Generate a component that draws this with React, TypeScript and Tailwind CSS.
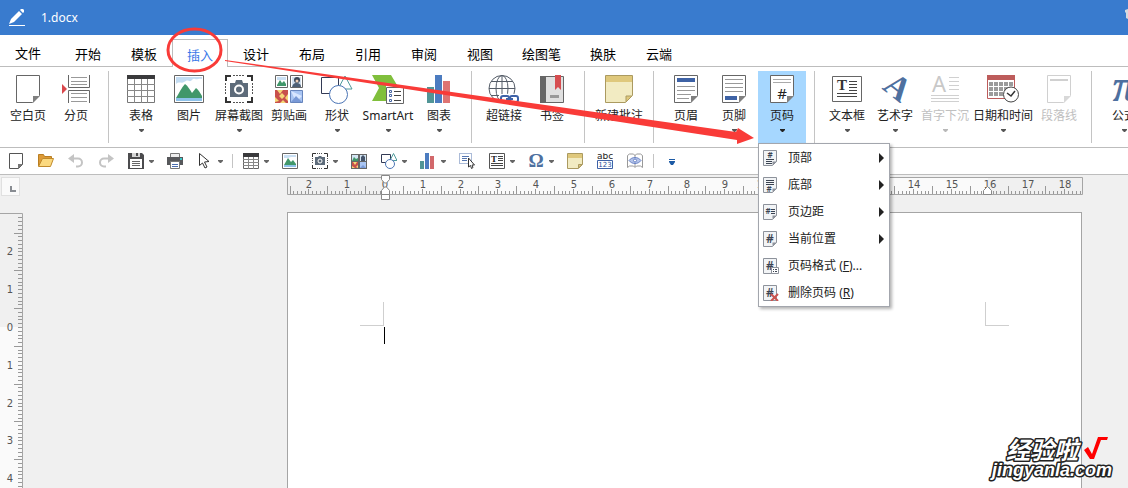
/**
 * App.tsx: Word processor window with the Insert ribbon open
 *
 * Title bar, ribbon tabs, ribbon groups, quick toolbar, rulers and page.
 * The page number button has its drop-down menu open.
 */

import type { ReactNode } from 'react'

interface IconProps {
    w?: number
    h?: number
    children: ReactNode
}

function Icon({ w = 28, h = 28, children }: IconProps) {
    return (
        <svg width={w} height={h} viewBox={`0 0 ${w} ${h}`} fill="none" aria-hidden="true" className="shrink-0">
            {children}
        </svg>
    )
}

function Caret({ className = 'text-[#555]' }: { className?: string }) {
    return (
        <svg width="5" height="3" viewBox="0 0 5 3" className={className} aria-hidden="true">
            <path d="M0 0h5v1L3 3H2L0 1z" fill="currentColor" />
        </svg>
    )
}

/* ---------- Ribbon icons (28px) ---------- */

function SheetIcon({ children, stroke = '#666', fold = '#808080' }: { children?: ReactNode; stroke?: string; fold?: string }) {
    return (
        <Icon w={24}>
            <path d="M.5.5h23v20l-7 7H.5z" fill="#fff" stroke={stroke} />
            <path d="M17 21h7l-7 7z" fill={fold} />
            {children}
        </Icon>
    )
}

const PageBreakIcon = () => (
    <Icon>
        <path d="M0 9l5 5-5 5z" fill="#d9484c" />
        <path d="M6.500 0v12.500h21V0M6.500 28V15.500h21V28" stroke="#666" />
        <path d="M9 2.500h16M9 6.500h16M9 9.500h16M9 18.500h16M9 22.500h16M9 26.500h16" stroke="#999" />
    </Icon>
)

const TableIcon = () => (
    <Icon>
        <path d="M.5.5h27v27H.5z" fill="#fff" stroke="#777" />
        <path d="M0 0h28v4H0z" fill="#3a3a3c" />
        <path d="M0 9.500h28M0 15.500h28M0 21.500h28M7.500 4v24M14.500 4v24M20.500 4v24" stroke="#888" />
    </Icon>
)

const PictureIcon = () => (
    <Icon w={30}>
        <path d="M.5.5h29v27H.5z" fill="#fff" stroke="#666" />
        <path d="M2 2h26v2c-3-1-5 1-7 0-3-1-3 3-6 2-2-1-3 0-5 1-2 2-5-1-8 2z" fill="#c3dcf2" />
        <path d="M2 23c3-5 6-11 9-14 3 2 5 6 7 9l4-5c3 2 4 5 6 8v3H2z" fill="#41976a" />
        <path d="M2 23h26v3H2z" fill="#8ec2ea" />
    </Icon>
)

const ScreenshotIcon = () => (
    <Icon>
        <path d="M8 .5h12M8 27.500h12M.5 8v12M27.500 8v12" stroke="#555" strokeDasharray="2 1" />
        <path d="M0 6V0h6v2H2v4zM22 0h6v6h-2V2h-4zM0 22h2v4h4v2H0zM26 22h2v6h-6v-2h4z" fill="#333" />
        <path d="M5 8h5l1-3h6l1 3h5v14H5z" fill="#5d6b7a" />
        <circle cx="14" cy="14.500" r="4" stroke="#fff" strokeWidth="2" />
    </Icon>
)

const ClipArtIcon = () => (
    <Icon>
        <path d="M.5.5h12v12H.5zM15.500.5h12v12h-12z" fill="#fff" stroke="#666" />
        <path d="M2 2h9v3H2z" fill="#c9dff3" />
        <path d="M2 10l3-5 2 3 2-2 2 3v2H2z" fill="#41976a" />
        <path d="M17 2h9v9h-9z" fill="#d3e1ef" />
        <circle cx="22" cy="5" r="3" fill="#3c4756" />
        <path d="M17 12c1-4 3-4 5-4s4 1 4 4z" fill="#4e6075" />
        <circle cx="22" cy="6" r="1.500" fill="#f0d0b8" />
        <path d="M0 15h13v13H0z" fill="#c8504c" />
        <path d="M2 15l3 4 3-4zM7 18l3 3-3 3-3-3zM13 19l-3 4 3 3zM0 22l4 4-4 1zM5 28l3-3 3 3z" fill="#f5d878" />
        <path d="M15.500 15.500h12v12h-12z" fill="#a9c5f3" stroke="#6785bd" />
        <path d="M16 16l11 5-6 6z" fill="#d8e6ff" />
        <path d="M16 27l5-6 6 6z" fill="#7999d6" />
    </Icon>
)

const ShapesIcon = () => (
    <Icon w={32} h={29}>
        <path d="M.5 2.500h17v16H.5z" stroke="#333a55" />
        <path d="M24 1l7 13H17z" stroke="#4f9a9b" />
        <circle cx="17.500" cy="19.500" r="9" fill="#fff" stroke="#4b74b5" />
    </Icon>
)

const SmartArtIcon = () => (
    <Icon w={32} h={29}>
        <path d="M0 0h19l6 10H14v16H0l7-13z" fill="#80bf3c" />
        <path d="M14.500 12.500h17v16h-17z" fill="#fff" stroke="#666" />
        <path d="M17.500 15.500h2v2h-2zM17.500 19.500h2v2h-2zM17.500 24.500h2v2h-2z" stroke="#4867a5" />
        <path d="M22 16.500h7M22 20.500h7M22 25.500h7" stroke="#444" />
    </Icon>
)

const ChartIcon = () => (
    <Icon w={24}>
        <path d="M0 12h7v16H0z" fill="#519596" />
        <path d="M8 0h7v28H8z" fill="#4c7cc0" />
        <path d="M16 6h7v22h-7z" fill="#de7473" />
    </Icon>
)

const LinkIcon = () => (
    <Icon w={32}>
        <circle cx="14" cy="13.500" r="13" stroke="#555d68" />
        <ellipse cx="14" cy="13.500" rx="6" ry="13" stroke="#555d68" />
        <path d="M14 0v27M1 13.500h26M3 6.500h22M3 20.500h22" stroke="#555d68" />
        <path d="M11 19h21v9H11z" fill="#fff" />
        <rect x="13" y="21" width="8" height="6" rx="2" stroke="#3e62a8" strokeWidth="2" />
        <rect x="22" y="21" width="8" height="6" rx="2" stroke="#3e62a8" strokeWidth="2" />
        <path d="M18 24h7" stroke="#3e62a8" strokeWidth="2" />
    </Icon>
)

const BookmarkIcon = () => (
    <Icon w={24}>
        <path d="M.5 1.500h23v26H.5z" fill="#e0e0e0" stroke="#666" />
        <path d="M0 1h6v27H0z" fill="#666" />
        <path d="M15 0h6v15l-3-3-3 3z" fill="#d64d50" />
        <path d="M10 20h9v3h-9z" fill="#999" />
    </Icon>
)

const NoteIcon = () => (
    <Icon>
        <path d="M.5.5h27v20l-7 7H.5z" fill="#f2ebc2" stroke="#ab9a60" />
        <path d="M1 1h26v6H1z" fill="#dfc87c" />
        <path d="M21 27v-6h6z" fill="#dfc87c" stroke="#ab9a60" />
    </Icon>
)

const HeaderIcon = () => (
    <SheetIcon>
        <path d="M3 3h18v4H3z" fill="#3e62a5" />
        <path d="M3 11.500h18M3 15.500h18M3 19.500h14M3 23.500h12" stroke="#999" />
    </SheetIcon>
)

const FooterIcon = () => (
    <SheetIcon>
        <path d="M3 4.500h18M3 8.500h18M3 12.500h18M3 16.500h18" stroke="#999" />
        <path d="M3 21h12v4H3z" fill="#3e62a5" />
    </SheetIcon>
)

const PageNumberIcon = () => (
    <SheetIcon>
        <path d="M3 4.500h18M3 7.500h18" stroke="#aaa" />
        <text x="12" y="24" textAnchor="middle" fontSize="15" fontFamily="Noto Sans, sans-serif" fill="#222">#</text>
    </SheetIcon>
)

const TextBoxIcon = () => (
    <Icon w={30}>
        <path d="M.5 1.500h29v25H.5z" fill="#fff" stroke="#666" />
        <text x="10" y="15" textAnchor="middle" fontSize="15" fontWeight="700" fontFamily="Liberation Serif, serif" fill="#333">T</text>
        <path d="M17 6.500h8M17 9.500h8M17 12.500h8M17 15.500h8M5 18.500h20M5 21.500h20" stroke="#444" />
    </Icon>
)

const WordArtIcon = () => (
    <Icon>
        <text x="10" y="21" transform="rotate(38 10 21)" textAnchor="middle" fontSize="34" fontWeight="700" fontFamily="Liberation Serif, serif" fill="#4e709f">A</text>
    </Icon>
)

const DropCapIcon = () => (
    <Icon>
        <text x="8" y="17" textAnchor="middle" fontSize="22" fontFamily="Noto Sans, sans-serif" fill="#c8c8c8">A</text>
        <path d="M18 2.500h10M18 6.500h10M18 10.500h10M18 14.500h10M0 20.500h28M0 23.500h28M0 26.500h28" stroke="#d0d0d0" />
    </Icon>
)

const DateTimeIcon = () => (
    <Icon w={32}>
        <path d="M.5.5h27v23H.5z" fill="#fff" stroke="#bd5c5b" />
        <path d="M0 0h28v5H0z" fill="#bd5c5b" />
        <path d="M2 9h24M2 14h24M2 19h18" stroke="#9b9b9b" strokeWidth="4" strokeDasharray="4 1" />
        <circle cx="24" cy="19.500" r="7.500" fill="#fff" stroke="#444" />
        <path d="M20 18l4 3 4-5" stroke="#333" strokeWidth="1.500" />
    </Icon>
)

const ParagraphLineIcon = () => (
    <SheetIcon stroke="#d0d0d0" fold="#d8d8d8">
        <path d="M3 4h18v2H3z" fill="#d0d0d0" />
    </SheetIcon>
)

const FormulaIcon = () => (
    <Icon>
        <text x="15" y="26" textAnchor="middle" fontSize="46" fontWeight="700" fontStyle="italic" fontFamily="Liberation Serif, serif" fill="#4e709f">π</text>
    </Icon>
)

/* ---------- Quick toolbar icons (16px) ---------- */

const SmallSheet = () => (
    <Icon w={16} h={16}>
        <path d="M1.500.5h13v11l-4 4h-9z" fill="#fff" stroke="#555" />
        <path d="M10 11h5l-5 5z" fill="#777" />
    </Icon>
)

const FolderIcon = () => (
    <Icon w={16} h={16}>
        <path d="M.5 13V1.500h5l1 2h7V6" fill="#dd9a36" stroke="#b97e22" />
        <path d="M.5 13.500L4.500 5.500h11l-3 8z" fill="#fbd97f" stroke="#c08a2c" />
    </Icon>
)

const UndoIcon = () => (
    <Icon w={16} h={16}>
        <path d="M0 5.500L6 1v9z" fill="#c4c4c4" />
        <path d="M5 5.500h5a4 4 0 010 8H8" stroke="#c4c4c4" strokeWidth="2" />
    </Icon>
)

const RedoIcon = () => (
    <Icon w={16} h={16}>
        <path d="M16 5.500L10 1v9z" fill="#c4c4c4" />
        <path d="M11 5.500H6a4 4 0 000 8h2" stroke="#c4c4c4" strokeWidth="2" />
    </Icon>
)

const SaveIcon = () => (
    <Icon w={16} h={16}>
        <path d="M0 0h14l2 2v14H0z" fill="#4c4c4e" />
        <path d="M4 0h8v4H4z" fill="#d5d5d5" />
        <path d="M8 0h2v3H8z" fill="#4c4c4e" />
        <path d="M2 6h12v9H2z" fill="#fff" />
        <path d="M4 8.500h8M4 10.500h8M4 12.500h8" stroke="#666" />
    </Icon>
)

const PrintIcon = () => (
    <Icon w={16} h={16}>
        <path d="M3.500.5h9V5h-9z" fill="#eee" stroke="#777" />
        <path d="M0 4h16v8H0z" fill="#57585b" />
        <path d="M13 5h2v2h-2z" fill="#38c7c7" />
        <path d="M3.500 8.500h9v7h-9z" fill="#fff" stroke="#777" />
        <path d="M5 11.500h6M5 13.500h6" stroke="#4b6eb0" />
    </Icon>
)

const CursorIcon = () => (
    <Icon w={16} h={16}>
        <path d="M2.500.5v12l3-2.500 2.500 5 2-1-2.500-5 4.500-.5z" fill="#fff" stroke="#333" />
    </Icon>
)

const SmallTable = () => (
    <Icon w={16} h={16}>
        <path d="M.5.5h15v15H.5z" fill="#fff" stroke="#666" />
        <path d="M0 0h16v4H0z" fill="#3a3a3c" />
        <path d="M0 6.500h16M0 9.500h16M0 12.500h16M5.500 4v12M10.500 4v12" stroke="#888" />
    </Icon>
)

const SmallPicture = () => (
    <Icon w={16} h={16}>
        <path d="M.5.5h15v15H.5z" fill="#fff" stroke="#666" />
        <path d="M2 2h12v2H9L6 5H2z" fill="#c9dff3" />
        <path d="M2 12l4-7 3 4 2-2 3 4v2H2z" fill="#41976a" />
        <path d="M2 12h12v2H2z" fill="#8ec2ea" />
    </Icon>
)

const SmallScreenshot = () => (
    <Icon w={16} h={16}>
        <path d="M.5 4V.5H4M12 .5h3.500V4M.5 12v3.500H4M15.500 12v3.500H12" stroke="#333" />
        <path d="M5 .5h6M5 15.500h6M.5 5v6M15.500 5v6" stroke="#555" strokeDasharray="1 1" />
        <path d="M3 4h3l1-1h2l1 1h3v8H3z" fill="#5d6b7a" />
        <circle cx="8" cy="8" r="2" stroke="#fff" />
    </Icon>
)

const SmallClipArt = () => (
    <Icon w={16} h={16}>
        <path d="M0 1h16v15H0z" fill="#666" />
        <path d="M1 2h6v6H1zM9 2h6v6H9z" fill="#d3e5f3" />
        <path d="M1 8l2-4 2 2 2-1v3z" fill="#41976a" />
        <path d="M10 8V4l2-2 2 2v4z" fill="#44536a" />
        <path d="M1 9h6v6H1z" fill="#c8504c" />
        <path d="M2 9l2 3 2-3zM1 13l3 2H1zM7 12l-2 2 2 1z" fill="#f5d878" />
        <path d="M9 9h6v6H9z" fill="#a9c5f3" />
        <path d="M9 15l3-3 3 3z" fill="#7999d6" />
    </Icon>
)

const SmallShapes = () => (
    <Icon w={16} h={16}>
        <path d="M.5 1.500h9v8h-9z" stroke="#333a55" />
        <path d="M12.500.5l3.500 7H9z" stroke="#4f9a9b" />
        <circle cx="9" cy="11" r="4.500" fill="#fff" stroke="#4b74b5" />
    </Icon>
)

const SmallChart = () => (
    <Icon w={16} h={16}>
        <path d="M0 8h4v8H0z" fill="#519596" />
        <path d="M5 0h4v16H5z" fill="#4c7cc0" />
        <path d="M10 3h4v13h-4z" fill="#d2686b" />
    </Icon>
)

const SelectIcon = () => (
    <Icon w={16} h={16}>
        <path d="M.5.5h12v10H.5z" stroke="#5676b0" strokeDasharray="1 1" />
        <path d="M3 3.500h7M3 5.500h5M3 7.500h5" stroke="#5676b0" />
        <path d="M9.500 5v9l2-1.500 1 3 1.500-1-1-2.500h2.500z" fill="#fff" stroke="#333" />
    </Icon>
)

const SmallTextBox = () => (
    <Icon w={16} h={16}>
        <path d="M.5.5h15v15H.5z" fill="#fff" stroke="#555" />
        <text x="5" y="9" textAnchor="middle" fontSize="9" fontWeight="700" fontFamily="Liberation Serif, serif" fill="#222">T</text>
        <path d="M9 3.500h5M9 5.500h5M9 7.500h5M2 10.500h12M2 12.500h12" stroke="#444" />
    </Icon>
)

const OmegaIcon = () => (
    <Icon w={16} h={16}>
        <text x="8" y="14" textAnchor="middle" fontSize="19" fontWeight="700" fontFamily="Liberation Serif, serif" fill="#4e709f">Ω</text>
    </Icon>
)

const SmallNote = () => (
    <Icon w={16} h={16}>
        <path d="M.5.5h15v11l-4 4H.5z" fill="#f2ebc2" stroke="#ab9a60" />
        <path d="M1 1h14v4H1z" fill="#dfc87c" />
        <path d="M11.500 15v-3.500H15z" fill="#dfc87c" stroke="#ab9a60" />
    </Icon>
)

const WordCountIcon = () => (
    <Icon w={16} h={16}>
        <text x="8" y="6" textAnchor="middle" fontSize="9" fontFamily="DejaVu Sans, sans-serif" fill="#222">abc</text>
        <path d="M.5 7.500h15v8H.5z" fill="#fff" stroke="#3e62a8" />
        <text x="8" y="14" textAnchor="middle" fontSize="7" fontFamily="DejaVu Sans, sans-serif" fill="#2c519b">123</text>
    </Icon>
)

const ReadIcon = () => (
    <Icon w={16} h={16}>
        <path d="M.5 2.500l2-1.500h4L8 2.500 9.500 1h4l2 1.500v12l-2-1.500h-4L8 14.500 6.500 13h-4l-2 1.500zM8 2v12" fill="#fff" stroke="#999" />
        <path d="M2 7.500c3-4 9-4 12 0-3 4-9 4-12 0z" fill="#b3c3ea" stroke="#6a83c4" />
        <circle cx="8" cy="7.500" r="1.500" fill="#fff" stroke="#6a83c4" />
    </Icon>
)

/* ---------- Ribbon ---------- */

interface RibbonItem {
    label: string
    icon: ReactNode
    caret?: boolean
    disabled?: boolean
    width?: string
    menu?: boolean
}

const RIBBON: RibbonItem[][] = [
    [
        { label: '空白页', icon: <SheetIcon /> },
        { label: '分页', icon: <PageBreakIcon /> },
    ],
    [
        { label: '表格', icon: <TableIcon />, caret: true },
        { label: '图片', icon: <PictureIcon /> },
        { label: '屏幕截图', icon: <ScreenshotIcon />, caret: true, width: 'w-[52px]' },
        { label: '剪贴画', icon: <ClipArtIcon /> },
        { label: '形状', icon: <ShapesIcon />, caret: true },
        { label: 'SmartArt', icon: <SmartArtIcon />, caret: true, width: 'w-[54px]' },
        { label: '图表', icon: <ChartIcon />, caret: true },
    ],
    [
        { label: '超链接', icon: <LinkIcon /> },
        { label: '书签', icon: <BookmarkIcon /> },
    ],
    [{ label: '新建批注', icon: <NoteIcon />, width: 'w-[52px]' }],
    [
        { label: '页眉', icon: <HeaderIcon /> },
        { label: '页脚', icon: <FooterIcon />, caret: true },
        { label: '页码', icon: <PageNumberIcon />, caret: true, menu: true },
    ],
    [
        { label: '文本框', icon: <TextBoxIcon />, caret: true },
        { label: '艺术字', icon: <WordArtIcon />, caret: true },
        { label: '首字下沉', icon: <DropCapIcon />, caret: true, disabled: true, width: 'w-[52px]' },
        { label: '日期和时间', icon: <DateTimeIcon />, caret: true, width: 'w-[64px]' },
        { label: '段落线', icon: <ParagraphLineIcon />, disabled: true },
    ],
    [{ label: '公式', icon: <FormulaIcon />, caret: true }],
]

function RibbonButton({ item }: { item: RibbonItem }) {
    return (
        <div className="relative">
            <button
                type="button"
                disabled={item.disabled}
                aria-haspopup={item.menu ? 'menu' : undefined}
                aria-expanded={item.menu}
                className={`flex h-[72px] flex-col items-center pt-1 ${item.width ?? 'w-12'} ${item.menu ? 'bg-[#a6d7ff]' : ''} ${item.disabled ? 'text-[#c0c0c0]' : 'text-[#222]'}`}
            >
                <span className="flex h-7 items-start">{item.icon}</span>
                <span className="mt-[5px] text-xs leading-4 whitespace-nowrap">{item.label}</span>
                {item.caret && (
                    <span className="mt-[5px] flex">
                        <Caret className={item.disabled ? 'text-[#b8b8b8]' : item.menu ? 'text-[#222]' : 'text-[#555]'} />
                    </span>
                )}
            </button>
            {item.menu && <PageNumberMenu />}
        </div>
    )
}

/* ---------- Page number menu ---------- */

function MenuSheet({ children, square = false }: { children: ReactNode; square?: boolean }) {
    return (
        <Icon w={16} h={16}>
            <path d={square ? 'M.5.5h13v15H.5z' : 'M.5.5h13v11l-4 4H.5z'} fill="#f2f4f6" stroke="#8d929b" />
            {!square && <path d="M9.500 15v-3.500H14z" fill="#8d929b" />}
            {children}
        </Icon>
    )
}

function Hash({ x, y, size }: { x: number; y: number; size: number }) {
    return (
        <text x={x} y={y} textAnchor="middle" fontSize={size} fontWeight="600" fontFamily="Noto Sans, sans-serif" fill="#3b4452">
            #
        </text>
    )
}

const MENU_ITEMS: { label: string; accessKey?: string; tail?: string; submenu?: boolean; icon: ReactNode }[] = [
    {
        label: '顶部',
        submenu: true,
        icon: (
            <MenuSheet>
                <Hash x={7} y={8} size={8} />
                <path d="M3 9.500h8M3 11.500h6M3 13.500h6" stroke="#3b4452" />
            </MenuSheet>
        ),
    },
    {
        label: '底部',
        submenu: true,
        icon: (
            <MenuSheet>
                <path d="M3 3.500h8M3 5.500h8M3 7.500h8" stroke="#3b4452" />
                <Hash x={6} y={15} size={8} />
            </MenuSheet>
        ),
    },
    {
        label: '页边距',
        submenu: true,
        icon: (
            <MenuSheet>
                <Hash x={5} y={10} size={8} />
                <path d="M8 5.500h4M8 7.500h4M8 9.500h4" stroke="#3b4452" />
            </MenuSheet>
        ),
    },
    {
        label: '当前位置',
        submenu: true,
        icon: (
            <MenuSheet>
                <Hash x={7} y={12} size={12} />
            </MenuSheet>
        ),
    },
    {
        label: '页码格式',
        accessKey: 'F',
        tail: '...',
        icon: (
            <MenuSheet square>
                <Hash x={7} y={12} size={12} />
                <path d="M8.500 9.500h7v6h-7z" fill="#fff" stroke="#8d929b" />
                <path d="M10 11.500h1M12 11.500h2M10 13.500h1M12 13.500h2" stroke="#3b4452" />
            </MenuSheet>
        ),
    },
    {
        label: '删除页码',
        accessKey: 'R',
        icon: (
            <MenuSheet square>
                <Hash x={7} y={12} size={12} />
                <path d="M8 9l7 7M15 9l-7 7" stroke="#cb5450" strokeWidth="2" />
            </MenuSheet>
        ),
    },
]

function PageNumberMenu() {
    return (
        <ul
            role="menu"
            aria-label="页码"
            className="absolute top-full left-0 z-20 w-[132px] border border-[#a3a6ad] bg-white shadow-[2px_2px_3px_rgba(0,0,0,0.3)]"
        >
            {MENU_ITEMS.map((item) => (
                <li key={item.label} role="none">
                    <button
                        type="button"
                        role="menuitem"
                        className="flex h-[27px] w-full items-center gap-2 pr-[5px] pl-1 text-left text-xs text-[#222] hover:bg-[#e5f1fb]"
                    >
                        {item.icon}
                        <span className="flex-1 pt-px pl-px whitespace-nowrap">
                            {item.label}
                            {item.accessKey && (
                                <>
                                    {' ('}
                                    <u>{item.accessKey}</u>
                                    {')'}
                                    {item.tail}
                                </>
                            )}
                        </span>
                        {item.submenu && (
                            <svg width="5" height="10" viewBox="0 0 5 10" aria-hidden="true">
                                <path d="M0 0l5 5-5 5z" fill="#222" />
                            </svg>
                        )}
                    </button>
                </li>
            ))}
        </ul>
    )
}

/* ---------- Quick toolbar ---------- */

interface QuickItem {
    name: string
    icon: ReactNode
    caret?: boolean
}

const QUICK_FILE: QuickItem[] = [
    { name: '新建', icon: <SmallSheet /> },
    { name: '打开', icon: <FolderIcon /> },
    { name: '撤销', icon: <UndoIcon /> },
    { name: '恢复', icon: <RedoIcon /> },
    { name: '保存', icon: <SaveIcon />, caret: true },
    { name: '打印', icon: <PrintIcon /> },
    { name: '选择', icon: <CursorIcon />, caret: true },
]

const QUICK_INSERT: QuickItem[] = [
    { name: '表格', icon: <SmallTable />, caret: true },
    { name: '图片', icon: <SmallPicture /> },
    { name: '屏幕截图', icon: <SmallScreenshot />, caret: true },
    { name: '剪贴画', icon: <SmallClipArt /> },
    { name: '形状', icon: <SmallShapes />, caret: true },
    { name: '图表', icon: <SmallChart />, caret: true },
    { name: '选择对象', icon: <SelectIcon /> },
    { name: '文本框', icon: <SmallTextBox />, caret: true },
    { name: '符号', icon: <OmegaIcon />, caret: true },
    { name: '批注', icon: <SmallNote /> },
    { name: '字数统计', icon: <WordCountIcon /> },
    { name: '阅读', icon: <ReadIcon /> },
]

function QuickButton({ item }: { item: QuickItem }) {
    return (
        <button
            type="button"
            aria-label={item.name}
            className={`flex h-full items-center gap-[5px] pl-[7px] ${item.caret ? 'pr-1.5' : 'pr-[7px]'}`}
        >
            {item.icon}
            {item.caret && <Caret className="text-[#666]" />}
        </button>
    )
}

/* ---------- Rulers ---------- */

const CM = 37.8

function tickPath(from: number, to: number, toPath: (offset: number, length: number) => string) {
    let d = ''
    for (let i = from; i <= to; i++) {
        const length = i % 10 === 0 ? 5 : i % 5 === 0 ? 8 : 3
        d += toPath(Math.round((i * CM) / 10), length)
    }
    return d
}

function HorizontalRuler() {
    const zero = 97
    const numbers = Array.from({ length: 21 }, (_, i) => i - 2)
    return (
        <svg width="796" height="26" viewBox="0 0 796 26" role="img" aria-label="水平标尺" className="shrink-0">
            <path d="M.5 2.500h795v17H.5z" fill="#f0f0f0" stroke="#a5a5a5" />
            <path d="M98 3h603v16H98z" fill="#fafafa" />
            <path d={tickPath(-25, 184, (x, l) => `M${zero + x + 0.5} 19v-${l}`)} stroke="#999" />
            <g fontSize="10" fontFamily="DejaVu Sans, sans-serif" fill="#555" textAnchor="middle">
                {numbers.map((n) => (
                    <text key={n} x={zero + Math.round(n * CM) + 1} y="13">
                        {Math.abs(n)}
                    </text>
                ))}
            </g>
            {/* first line and hanging indent markers */}
            <path d="M94.500.5h8v4l-3 3.500h-2l-3-3.500zM94.500 19.500v-4L97.500 12h2l3 3.500v4zM94.500 19.500h8v5h-8z" fill="#fff" stroke="#888" />
            <path d="M696.500 19.500v-4l4-4 4 4v4z" fill="#fff" stroke="#888" />
        </svg>
    )
}

function VerticalRuler() {
    const zero = 114
    const numbers = Array.from({ length: 12 }, (_, i) => i - 2)
    return (
        <svg width="23" height="480" viewBox="0 0 23 480" role="img" aria-label="垂直标尺">
            <path d="M0 114h22v366H0z" fill="#fafafa" />
            <path d="M0 .5h22.500V480" fill="none" stroke="#a5a5a5" />
            <path d={tickPath(-29, 96, (y, l) => `M22 ${zero + y + 0.5}h-${l === 8 ? 8 : 4}`)} stroke="#999" />
            <g fontSize="10" fontFamily="DejaVu Sans, sans-serif" fill="#555" textAnchor="middle">
                {numbers.map((n) => (
                    <text key={n} x="10" y={zero + Math.round(n * CM) + 4}>
                        {Math.abs(n)}
                    </text>
                ))}
            </g>
        </svg>
    )
}

/* ---------- Window ---------- */

const TABS = ['开始', '模板', '插入', '设计', '布局', '引用', '审阅', '视图', '绘图笔', '换肤', '云端']

export default function App() {
    return (
        <div className="relative flex h-screen flex-col overflow-hidden bg-[#f0f0f0] font-['Noto_Sans','Noto_Sans_CJK_SC',sans-serif]">
            <header className="flex h-[35px] shrink-0 items-center bg-[#397bce] pl-2 text-white">
                <Icon w={17} h={17}>
                    <path d="M1 16.500h16" stroke="#fff" />
                    <path d="M1 15l2-5 8-8 3 3-8 8zM12 1l1-1h2l1 1v2l-1 1z" fill="#fff" />
                </Icon>
                <h1 className="ml-4 flex-1 text-xs leading-5">1.docx</h1>
                <svg width="3" height="10" viewBox="0 0 3 10" aria-hidden="true" className="mb-2">
                    <path d="M0 1l3-1v10L1 9V4L0 3z" fill="#d5d9df" />
                </svg>
            </header>

            <nav aria-label="功能区" className="flex h-8 shrink-0 items-stretch border-b border-[#bdbdbd] bg-white pt-1 text-[13px] leading-5 text-black">
                <button type="button" className="mr-1 w-14">文件</button>
                {TABS.map((tab) => {
                    const active = tab === '插入'
                    return (
                        <button
                            key={tab}
                            type="button"
                            aria-current={active ? 'page' : undefined}
                            className={`min-w-14 border-x border-t px-[13px] pt-0.5 whitespace-nowrap ${active ? '-mb-px border-[#bdbdbd] bg-white text-[#3a78e8]' : 'border-transparent'}`}
                        >
                            {tab}
                        </button>
                    )
                })}
            </nav>

            <div className="flex h-[81px] shrink-0 items-start border-b border-[#bdbdbd] bg-white pt-1">
                {RIBBON.map((group, i) => (
                    <div key={group[0].label} className={`flex shrink-0 ${i === 0 ? 'pl-1' : 'pl-2'}`}>
                        {group.map((item) => (
                            <RibbonButton key={item.label} item={item} />
                        ))}
                        {i < RIBBON.length - 1 && <span className="ml-2 h-[72px] w-px bg-[#c4c4c4]" />}
                    </div>
                ))}
            </div>

            <div className="flex h-[27px] shrink-0 items-center border-b border-[#bdbdbd] bg-white pl-px">
                {QUICK_FILE.map((item) => (
                    <QuickButton key={item.name} item={item} />
                ))}
                <span className="mx-[3px] h-3.5 w-px bg-[#c4c4c4]" />
                {QUICK_INSERT.map((item) => (
                    <QuickButton key={item.name} item={item} />
                ))}
                <span className="mx-[3px] h-3.5 w-px bg-[#c4c4c4]" />
                <button type="button" aria-label="自定义工具栏" className="px-3 pt-0.5">
                    <svg width="6" height="6" viewBox="0 0 6 6" aria-hidden="true">
                        <path d="M0 0h6v1H0zM0 2h6v1L4 6H2L0 3z" fill="#1d5ba5" />
                    </svg>
                </button>
            </div>

            <main className="relative flex min-h-0 flex-1 overflow-hidden">
                <div className="flex w-[287px] shrink-0 flex-col">
                    <button
                        type="button"
                        aria-label="制表符"
                        className="mt-0.5 ml-px flex size-[19px] shrink-0 items-center justify-center border border-[#e0e0e0] bg-[#fafafa] pt-1 pl-1"
                    >
                        <span className="size-1.5 border-b-2 border-l-2 border-[#888c92]" />
                    </button>
                    <div className="mt-[17px]">
                        <VerticalRuler />
                    </div>
                </div>
                <div className="flex w-[796px] shrink-0 flex-col">
                    <HorizontalRuler />
                    <div className="mt-[11px] flex w-[795px] flex-1 items-start justify-between border border-b-0 border-[#a5a5a5] bg-white px-[72px] pt-[89px]">
                        <div className="flex flex-col items-end">
                            <span className="size-6 border-r border-b border-[#cfcfcf]" />
                            <span className="-mr-px mt-px h-[17px] w-px bg-black" />
                        </div>
                        <span className="size-6 border-b border-l border-[#cfcfcf]" />
                    </div>
                </div>
            </main>

            {/* red marker: circled tab and arrow to the page number button */}
            <svg width="760" height="150" viewBox="0 0 760 150" fill="none" aria-hidden="true" className="pointer-events-none absolute top-0 left-0 z-30">
                <ellipse cx="194.500" cy="50" rx="26.500" ry="21" stroke="#f93b38" strokeWidth="3" />
                <path d="M225 60l511 72 2-4 16 10-17 6v-4L225 61z" fill="#f93b38" />
            </svg>

            {/* site watermark */}
            <svg width="132" height="54" viewBox="0 0 132 54" aria-label="经验啦 jingyanla.com" className="pointer-events-none absolute right-3 bottom-1 z-30">
                <g fill="#fff" stroke="#222" strokeWidth="3" strokeLinejoin="round" paintOrder="stroke" fontWeight="700" fontStyle="italic">
                    <text x="22" y="29" fontSize="24" fontFamily="Noto Sans CJK SC, sans-serif">经验啦</text>
                    <text x="8" y="46" fontSize="18" fontFamily="Liberation Sans, sans-serif">jingyanla.com</text>
                </g>
                <path d="M100 20l4-3 4 7 6-17h10l-1 3h-6l-7 19h-4z" fill="#f00" />
            </svg>
        </div>
    )
}
